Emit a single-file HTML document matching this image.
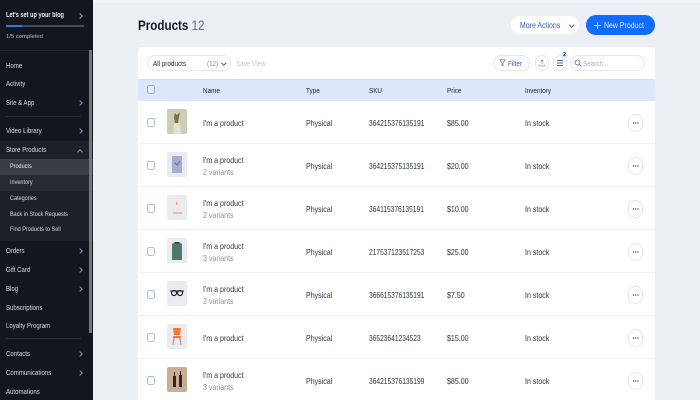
<!DOCTYPE html>
<html><head><meta charset="utf-8"><style>
*{box-sizing:border-box}
html,body{margin:0;padding:0}
body{width:700px;height:400px;overflow:hidden;background:#eceff3;font-family:"Liberation Sans",sans-serif;position:relative;color:#1c2433}
#w{position:absolute;left:0;top:0;width:700px;height:400px;filter:blur(.35px)}
.a{position:absolute;white-space:nowrap}
#s{position:absolute;left:0;top:0;width:93px;height:400px;background:#12161f;overflow:hidden;color:#d5d8de}
.x{position:absolute;white-space:nowrap;left:6px;font-size:7.6px;line-height:12px;transform:scaleX(.8);transform-origin:0 0}
.y{position:absolute;white-space:nowrap;left:10px;font-size:6.4px;line-height:12px;transform:scaleX(.86);transform-origin:0 0}
.ch{position:absolute;left:78px;width:4px;height:4px;margin-top:.5px;border-top:.8px solid #8c919b;border-right:.8px solid #8c919b;transform:rotate(45deg)}
.row{position:absolute;left:138px;width:517px;height:43px;background:#fff;border-bottom:1.5px solid #eef0f3;font-size:8.3px;color:#2b3240}
.row .a{line-height:10px;transform:scaleX(.85);transform-origin:0 0}
.row .sku{transform:scaleX(.8)}
.v{color:#8a92a0}
.cb{position:absolute;left:147px;width:8px;height:9px;border:1px solid #a6bede;border-radius:2.5px;background:#fff}
.th{position:absolute;left:167px;width:20px;height:25px;background:#e9ebf0;border-radius:2px;overflow:hidden}
.dots{position:absolute;left:628px;width:15px;height:18px;border:1px solid #e2e6ec;border-radius:8px;background:#fff}
.dots:after{content:"";position:absolute;left:3.8px;top:7.3px;width:1.6px;height:1.6px;border-radius:50%;background:#2f62b8;box-shadow:2.2px 0 #2f62b8,4.400px 0 #2f62b8}
.pill{position:absolute;background:#fff;border:1px solid #e3e8ef;border-radius:9px;height:16px}
.t{font-size:7.2px;line-height:10px;transform:scaleX(.88);transform-origin:0 0;margin-top:.7px}
.b{font-size:8.3px;line-height:10px;transform:scaleX(.84);transform-origin:0 0}
</style></head><body><div id="w">
<div class="a" style="left:0;top:0;width:700px;height:3px;background:#f1f5f7"></div>

<div id="s">
<div class="x" style="top:10px;color:#f0f1f3;font-weight:bold;font-size:7px">Let's set up your blog</div><div class="ch" style="top:13px"></div>
<div class="a" style="left:6px;top:25px;width:78px;height:2px;background:#4a4e57"></div>
<div class="a" style="left:6px;top:25px;width:16px;height:2px;background:#2f75e6"></div>
<div class="a" style="left:6px;top:31px;font-size:5.9px;line-height:12px;color:#b5b8be">1/5 completed</div>
<div class="a" style="left:0;top:50px;width:93px;height:1px;background:#1f232c"></div>
<div class="x" style="top:60px">Home</div>
<div class="x" style="top:78px">Activity</div>
<div class="x" style="top:97px">Site &amp; App</div><div class="ch" style="top:100px"></div>
<div class="a" style="left:6px;top:116px;width:75px;height:1px;background:#2a2e37"></div>
<div class="x" style="top:125px">Video Library</div><div class="ch" style="top:128px"></div>
<div class="a" style="left:0;top:141px;width:93px;height:100px;background:#1c2028"></div>
<div class="x" style="top:144px">Store Products</div>
<div class="ch" style="top:149px;transform:rotate(-45deg)"></div>
<div class="a" style="left:0;top:159px;width:93px;height:16px;background:#3a3d44"></div>
<div class="a" style="left:0;top:175px;width:93px;height:16px;background:#272a32"></div>
<div class="y" style="top:161px;color:#e8e9eb">Products</div>
<div class="y" style="top:177px">Inventory</div>
<div class="y" style="top:193px">Categories</div>
<div class="y" style="top:209px">Back in Stock Requests</div>
<div class="y" style="top:224px">Find Products to Sell</div>
<div class="x" style="top:245px">Orders</div><div class="ch" style="top:248px"></div>
<div class="x" style="top:264px">Gift Card</div><div class="ch" style="top:267px"></div>
<div class="x" style="top:283px">Blog</div><div class="ch" style="top:286px"></div>
<div class="x" style="top:302px">Subscriptions</div>
<div class="x" style="top:320px">Loyalty Program</div>
<div class="a" style="left:6px;top:338px;width:75px;height:1px;background:#2a2e37"></div>
<div class="x" style="top:348px">Contacts</div><div class="ch" style="top:351px"></div>
<div class="x" style="top:367px">Communications</div><div class="ch" style="top:370px"></div>
<div class="x" style="top:386px">Automations</div>
<div class="a" style="left:89px;top:50px;width:3px;height:283px;background:#72767d"></div>
</div>

<div class="a" style="left:138px;top:16px;font-size:14px;line-height:18px;font-weight:bold;color:#14181f;transform:scaleX(.83);transform-origin:0 0">Products <span style="font-weight:normal;color:#5d6b85">12</span></div>

<div class="a" style="left:511px;top:16px;width:68px;height:18px;background:#fff;border-radius:9px"></div>
<div class="a b" style="left:520px;top:20px;color:#2f62b8">More Actions</div>
<div class="a" style="left:569.500px;top:22.500px;width:3.500px;height:3.500px;border-right:.7px solid #2f62b8;border-bottom:.7px solid #2f62b8;transform:rotate(45deg)"></div>
<div class="a" style="left:586px;top:15px;width:69px;height:20px;background:#116dff;border-radius:10px"></div>
<div class="a b" style="left:604px;top:20px;color:#e3edff">New Product</div>
<svg class="a" style="left:593px;top:21px" width="9" height="9"><path d="M4.500 1v7M1 4.500h7" stroke="#e3edff" stroke-width=".8"/></svg>

<div class="a" style="left:138px;top:47px;width:517px;height:32px;background:#fff;border-radius:4px 4px 0 0"></div>
<div class="pill" style="left:147px;top:55px;width:84px"></div>
<div class="a t" style="left:153px;top:58px">All products</div>
<div class="a t" style="left:207px;top:58px;color:#8b93a3">(12)</div>
<div class="a" style="left:222px;top:61px;width:3.500px;height:3.500px;border-right:.7px solid #2f62b8;border-bottom:.7px solid #2f62b8;transform:rotate(45deg)"></div>
<div class="a t" style="left:236px;top:58px;color:#c2c7cf">Save View</div>

<div class="pill" style="left:493px;top:55px;width:37px"></div>
<svg class="a" style="left:499px;top:59px" width="7" height="8"><path d="M.7.8h5.600L4 3.800V7L3 6.500V3.800z" fill="none" stroke="#2f62b8" stroke-width=".6"/></svg>
<div class="a t" style="left:508px;top:58px;color:#2f62b8">Filter</div>
<div class="pill" style="left:535px;top:55px;width:14px"></div>
<svg class="a" style="left:538px;top:59px" width="8" height="8"><path d="M4 5.500V1M2.500 2.500L4 1l1.500 1.500M1 5.500V7h6V5.500" fill="none" stroke="#5a7fb8" stroke-width=".6"/></svg>
<div class="pill" style="left:553px;top:55px;width:14px"></div>
<svg class="a" style="left:556px;top:59px" width="8" height="8"><path d="M1 1.500h6M1 4h6M1 6.500h6" fill="none" stroke="#3f6ab0" stroke-width=".9"/></svg>
<div class="a" style="left:561px;top:52px;width:7px;height:7px;border-radius:50%;background:#dbe8fb;font-size:5px;line-height:7px;text-align:center;color:#1c2433;font-weight:bold">2</div>
<div class="pill" style="left:570px;top:55px;width:75px"></div>
<svg class="a" style="left:574px;top:59px" width="8" height="8"><circle cx="3.500" cy="3.500" r="2.500" fill="none" stroke="#2f62b8" stroke-width=".7"/><path d="M5.500 5.500L7.500 7.500" stroke="#2f62b8" stroke-width=".7"/></svg>
<div class="a t" style="left:583px;top:58px;color:#a5abb6">Search...</div>

<div class="a" style="left:138px;top:79px;width:517px;height:22px;background:#dbe8fb;border-top:1px solid #cfdff5"></div>
<div class="cb" style="top:85px;background:#eaf1fc;border-color:#8ea9cf"></div>
<div class="a t" style="left:203px;top:85px">Name</div>
<div class="a t" style="left:306px;top:85px">Type</div>
<div class="a t" style="left:369px;top:85px">SKU</div>
<div class="a t" style="left:447px;top:85px">Price</div>
<div class="a t" style="left:525px;top:85px">Inventory</div>

<div class="row" style="top:101px"><div class="a" style="left:65px;top:17px">I'm a product</div><div class="a" style="left:168px;top:17px">Physical</div><div class="a sku" style="left:231px;top:17px">364215376135191</div><div class="a" style="left:309px;top:17px">$85.00</div><div class="a" style="left:387px;top:17px">In stock</div></div>
<div class="row" style="top:144px"><div class="a" style="left:65px;top:11px">I'm a product</div><div class="a v" style="left:65px;top:23px">2 variants</div><div class="a" style="left:168px;top:17px">Physical</div><div class="a sku" style="left:231px;top:17px">364215375135191</div><div class="a" style="left:309px;top:17px">$20.00</div><div class="a" style="left:387px;top:17px">In stock</div></div>
<div class="row" style="top:187px"><div class="a" style="left:65px;top:11px">I'm a product</div><div class="a v" style="left:65px;top:23px">2 variants</div><div class="a" style="left:168px;top:17px">Physical</div><div class="a sku" style="left:231px;top:17px">364115376135191</div><div class="a" style="left:309px;top:17px">$10.00</div><div class="a" style="left:387px;top:17px">In stock</div></div>
<div class="row" style="top:230px"><div class="a" style="left:65px;top:11px">I'm a product</div><div class="a v" style="left:65px;top:23px">3 variants</div><div class="a" style="left:168px;top:17px">Physical</div><div class="a sku" style="left:231px;top:17px">217537123517253</div><div class="a" style="left:309px;top:17px">$25.00</div><div class="a" style="left:387px;top:17px">In stock</div></div>
<div class="row" style="top:273px"><div class="a" style="left:65px;top:11px">I'm a product</div><div class="a v" style="left:65px;top:23px">2 variants</div><div class="a" style="left:168px;top:17px">Physical</div><div class="a sku" style="left:231px;top:17px">366615376135191</div><div class="a" style="left:309px;top:17px">$7.50</div><div class="a" style="left:387px;top:17px">In stock</div></div>
<div class="row" style="top:316px"><div class="a" style="left:65px;top:17px">I'm a product</div><div class="a" style="left:168px;top:17px">Physical</div><div class="a sku" style="left:231px;top:17px">36523641234523</div><div class="a" style="left:309px;top:17px">$15.00</div><div class="a" style="left:387px;top:17px">In stock</div></div>
<div class="row" style="top:359px;height:41px;border:0"><div class="a" style="left:65px;top:11px">I'm a product</div><div class="a v" style="left:65px;top:23px">3 variants</div><div class="a" style="left:168px;top:17px">Physical</div><div class="a sku" style="left:231px;top:17px">364215376135199</div><div class="a" style="left:309px;top:17px">$85.00</div><div class="a" style="left:387px;top:17px">In stock</div></div>

<div class="cb" style="top:118px"></div><div class="cb" style="top:161px"></div><div class="cb" style="top:204px"></div><div class="cb" style="top:247px"></div><div class="cb" style="top:290px"></div><div class="cb" style="top:333px"></div><div class="cb" style="top:376px"></div>
<div class="dots" style="top:114px"></div><div class="dots" style="top:157px"></div><div class="dots" style="top:200px"></div><div class="dots" style="top:243px"></div><div class="dots" style="top:286px"></div><div class="dots" style="top:329px"></div><div class="dots" style="top:372px"></div>

<div class="th" style="top:109px;background:#c9cfb5"><svg width="20" height="25"><path d="M8 4l2 2 3-3-1 5-1 6h-3l-1-6z" fill="#8a6a4a"/><path d="M7 14h6l1 11H6z" fill="#dfe3d5"/></svg></div>
<div class="th" style="top:152px"><svg width="20" height="25"><rect x="5" y="4" width="10" height="17" fill="#a9acd0"/><path d="M8 11l2 2 3-4" stroke="#6b70a0" fill="none"/></svg></div>
<div class="th" style="top:195px"><svg width="20" height="25"><rect x="8.500" y="10" width="3" height="7" fill="#f1e7dc"/><path d="M9 7h1.500v3H9z" fill="#f0a878"/><path d="M6 18h9" stroke="#e89058"/></svg></div>
<div class="th" style="top:238px"><svg width="20" height="25"><path d="M5 6l3-2h4l3 2v16H5z" fill="#4f7a68"/><path d="M8 4h4v2H8z" fill="#2f4f44"/></svg></div>
<div class="th" style="top:281px"><svg width="20" height="25"><path d="M3 10h14" stroke="#222"/><circle cx="7" cy="12" r="2.500" fill="none" stroke="#222" stroke-width="1.200"/><circle cx="13" cy="12" r="2.500" fill="none" stroke="#222" stroke-width="1.200"/></svg></div>
<div class="th" style="top:324px"><svg width="20" height="25"><path d="M6 4h8l-1 7H7z" fill="#ee7c35"/><rect x="6" y="12" width="8" height="2" fill="#ee7c35"/><path d="M7 14l-1 7M13 14l1 7" stroke="#b98a5e"/></svg></div>
<div class="th" style="top:367px;background:#c9ae94"><svg width="20" height="25"><rect x="6" y="9" width="3" height="11" fill="#2c2a28"/><rect x="12" y="8" width="3" height="12" fill="#2c2a28"/><rect x="7" y="5" width="1" height="4" fill="#2c2a28"/><rect x="13" y="4" width="1" height="4" fill="#2c2a28"/></svg></div>
</div></body></html>
